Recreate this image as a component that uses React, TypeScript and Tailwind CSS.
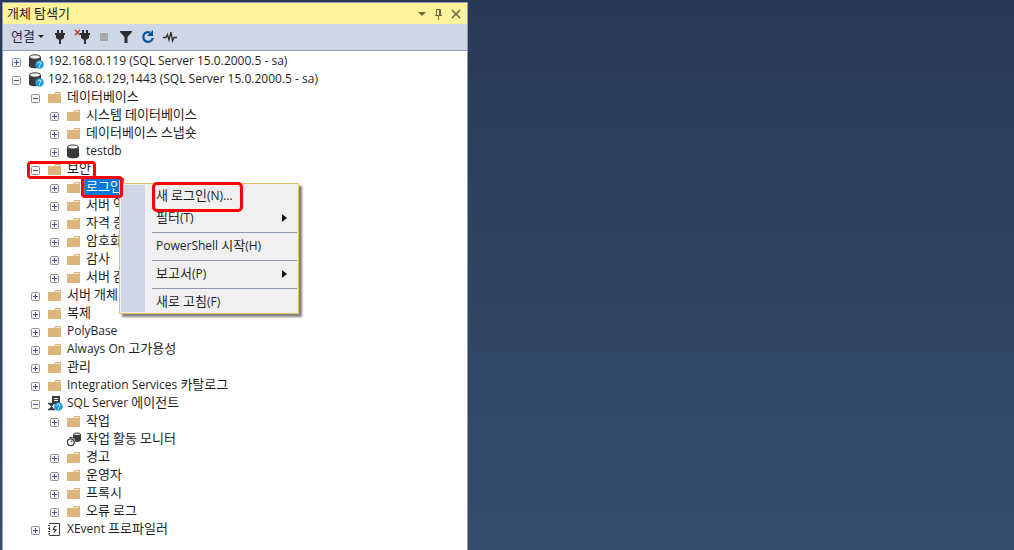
import type { ReactNode } from 'react';

type IconName = 'server' | 'folder' | 'database' | 'agent' | 'monitor' | 'xevent';

interface TreeItem {
  label: string;
  icon: IconName;
  open?: boolean;
  leaf?: boolean;
  selected?: boolean;
  marked?: boolean;
  children?: TreeItem[];
}

const tree: TreeItem[] = [
  { label: '192.168.0.119 (SQL Server 15.0.2000.5 - sa)', icon: 'server' },
  {
    label: '192.168.0.129,1443 (SQL Server 15.0.2000.5 - sa)',
    icon: 'server',
    open: true,
    children: [
      {
        label: '데이터베이스',
        icon: 'folder',
        open: true,
        children: [
          { label: '시스템 데이터베이스', icon: 'folder' },
          { label: '데이터베이스 스냅숏', icon: 'folder' },
          { label: 'testdb', icon: 'database' },
        ],
      },
      {
        label: '보안',
        icon: 'folder',
        open: true,
        marked: true,
        children: [
          { label: '로그인', icon: 'folder', selected: true },
          { label: '서버 역할', icon: 'folder' },
          { label: '자격 증명', icon: 'folder' },
          { label: '암호화', icon: 'folder' },
          { label: '감사', icon: 'folder' },
          { label: '서버 감사', icon: 'folder' },
        ],
      },
      { label: '서버 개체', icon: 'folder' },
      { label: '복제', icon: 'folder' },
      { label: 'PolyBase', icon: 'folder' },
      { label: 'Always On 고가용성', icon: 'folder' },
      { label: '관리', icon: 'folder' },
      { label: 'Integration Services 카탈로그', icon: 'folder' },
      {
        label: 'SQL Server 에이전트',
        icon: 'agent',
        open: true,
        children: [
          { label: '작업', icon: 'folder' },
          { label: '작업 활동 모니터', icon: 'monitor', leaf: true },
          { label: '경고', icon: 'folder' },
          { label: '운영자', icon: 'folder' },
          { label: '프록시', icon: 'folder' },
          { label: '오류 로그', icon: 'folder' },
        ],
      },
      { label: 'XEvent 프로파일러', icon: 'xevent' },
    ],
  },
];

const menuGroups = [
  [
    { label: '새 로그인(N)...', marked: true },
    { label: '필터(T)', submenu: true },
  ],
  [{ label: 'PowerShell 시작(H)' }],
  [{ label: '보고서(P)', submenu: true }],
  [{ label: '새로 고침(F)' }],
];

// Hangul runs one step larger than Latin so both look the same height
function Label({ text }: { text: string }) {
  return (
    <span className="whitespace-nowrap">
      {text.split(/([가-힣]+)/).map((run, i) => (
        <span key={i} className={i % 2 ? 'text-[13px]' : 'text-xs'}>{run}</span>
      ))}
    </span>
  );
}

function HelpBadge() {
  return (
    <>
      <circle cx="10.5" cy="10.5" r="4.3" fill="#1e9be0" />
      <path d="M9 9.500c0-2 3-2 3 0 0 1-1.500 1-1.500 2M10.500 12.300v1.200" stroke="#fff" fill="none" />
    </>
  );
}

function TreeIcon({ name }: { name: IconName }) {
  const icons: Record<IconName, ReactNode> = {
    folder: (
      <>
        <path d="M0 4h6l1.500-2H13v11H0z" fill="#dcb67a" />
        <path d="M7.500 3.500H12" stroke="#f3e3c8" />
      </>
    ),
    database: (
      <>
        <path d="M0 3v9c0 3 12 3 12 0V3z" fill="#3a3a3a" />
        <ellipse cx="6" cy="3" rx="5.500" ry="2" fill="#f4f4f4" stroke="#3a3a3a" />
      </>
    ),
    server: (
      <>
        <path d="M0 3v9c0 3 12 3 12 0V3z" fill="#3a3a3a" />
        <ellipse cx="6" cy="3" rx="5.500" ry="2.200" fill="#f4f4f4" stroke="#3a3a3a" />
        <HelpBadge />
      </>
    ),
    agent: (
      <>
        <path d="M4 0h8v8H4z" fill="#3a3a3a" />
        <path d="M6 2.500h4M6 4.500h4" stroke="#fff" />
        <path d="M0 7.500h7M0 13.500h7" stroke="#3a3a3a" strokeWidth="1.500" />
        <path d="M1 8h5L4 10.500 6 13H1l2-2.500z" fill="#3a3a3a" />
        <HelpBadge />
      </>
    ),
    monitor: (
      <>
        <path d="M6 2v6c0 2.500 8 2.500 8 0V2z" fill="#3a3a3a" />
        <ellipse cx="10" cy="2.200" rx="3.500" ry="1.200" fill="#f4f4f4" stroke="#3a3a3a" />
        <circle cx="3.800" cy="10" r="4.600" fill="#fff" />
        <circle cx="3.800" cy="10.200" r="3.400" fill="#fff" stroke="#3a3a3a" strokeWidth="1.300" />
        <path d="M3.800 10.200l1.600-1.600M2.500 5.500h3" stroke="#3a3a3a" strokeWidth="1.200" />
      </>
    ),
    xevent: (
      <>
        <path d="M1.500 1.500h10v12h-10z" fill="#fff" stroke="#3a3a3a" />
        <path d="M1.500 2v12" stroke="#fff" strokeDasharray="1 1" />
        <path d="M0 3.500h2M0 6.500h2M0 9.500h2M0 12h2" stroke="#3a3a3a" />
        <path d="M8.500 4.500h-2l-1 3h2.500l-2 3" stroke="#3a3a3a" strokeWidth="1.200" fill="none" />
      </>
    ),
  };
  return <svg viewBox="0 0 15 15" className="h-[15px] w-[15px] shrink-0">{icons[name]}</svg>;
}

function Expander({ open }: { open?: boolean }) {
  return (
    <button type="button" aria-label={open ? '접기' : '펼치기'} className="mt-[2px] h-[9px] w-[9px] shrink-0">
      <svg viewBox="0 0 9 9" className="block h-[9px] w-[9px]">
        <rect x=".5" y=".5" width="8" height="8" rx="1" fill="#f5f5f5" stroke="#919191" />
        <path d={open ? 'M2 4.500h5' : 'M2 4.500h5M4.500 2v5'} stroke="#3c56a8" />
      </svg>
    </button>
  );
}

function TreeRow({ item }: { item: TreeItem }) {
  return (
    <li>
      <div className="relative flex h-[18px] items-center">
        {item.leaf ? <span className="w-[9px]" /> : <Expander open={item.open} />}
        <span className="ml-2 flex"><TreeIcon name={item.icon} /></span>
        <span className={item.selected ? 'relative ml-[2px] flex h-[18px] items-center border border-dotted border-[#d98a28] bg-[#0078d7] px-px text-white' : 'ml-1 flex'}>
          <Label text={item.label} />
          {item.selected && <span className="absolute -bottom-[3px] -left-1 -top-[3px] right-0 z-20 rounded-[4px] border-3 border-[#ff0000]" />}
          {item.selected && <ContextMenu />}
        </span>
        {item.marked && <span className="absolute -left-1 top-px h-[18px] w-[69px] rounded-[4px] border-3 border-[#ff0000]" />}
      </div>
      {item.open && item.children && (
        <ul className="pl-[19px]">
          {item.children.map(child => <TreeRow key={child.label} item={child} />)}
        </ul>
      )}
    </li>
  );
}

function ContextMenu() {
  return (
    <div className="absolute left-[34px] top-[4px] z-10 flex w-[180px] border border-[#e5c365] bg-[#f0f0f0] text-[#1e1e1e] shadow-[3px_3px_2px_rgba(0,0,0,0.5)]">
      <div className="m-px w-6 shrink-0 bg-[#cfd6e5]" />
      <div className="flex-1 pl-1.5 pr-px pt-px">
        {menuGroups.map((group, i) => (
          <div key={i} className="border-[#8f9bad] pb-[3px] not-first:border-t not-first:pt-[2px] last:pb-0">
            {group.map(entry => (
              <button key={entry.label} type="button" className="relative flex h-[22px] w-full items-center justify-between pl-1 pr-2.5">
                <Label text={entry.label} />
                {'submenu' in entry && (
                  <svg viewBox="0 0 5 8" className="h-2 w-[5px]"><path d="M0 0l5 4-5 4z" fill="#111" /></svg>
                )}
                {'marked' in entry && <span className="absolute -top-[3px] left-0 h-[30px] w-[91px] rounded-[5px] border-3 border-[#ff0000]" />}
              </button>
            ))}
          </div>
        ))}
      </div>
    </div>
  );
}

function Plug() {
  return <path d="M5 1h2v3h2V1h2v3h2v2h-1v3l-2 1.500H9V15H7v-4.500H6L4 9V6H3V4h2z" fill="#2d2d2d" />;
}

function Toolbar() {
  return (
    <div className="flex h-[26px] items-center bg-[#cfd6e5] pl-2 text-[#1b293e]">
      <button type="button" className="flex items-center gap-[3px]">
        <Label text="연결" />
        <svg viewBox="0 0 6 3" className="h-[3px] w-1.5"><path d="M0 0h6L3 3z" fill="#1b293e" /></svg>
      </button>
      <button type="button" aria-label="개체 탐색기 연결" className="ml-2">
        <svg viewBox="0 0 16 16" className="h-4 w-4"><Plug /></svg>
      </button>
      <button type="button" aria-label="연결 끊기" className="ml-1.5">
        <svg viewBox="0 0 18 16" className="h-4 w-[18px]">
          <g transform="translate(3 0)"><Plug /></g>
          <path d="M1 1l5 5M6 1L1 6" stroke="#b5341f" strokeWidth="1.300" />
        </svg>
      </button>
      <button type="button" aria-label="중지" className="ml-2 h-2 w-2 bg-[#a7a9b0]" />
      <button type="button" aria-label="필터" className="ml-3">
        <svg viewBox="0 0 12 12" className="h-3 w-3"><path d="M0 0h12v1L7.500 6v6h-3V6L0 1z" fill="#2d2d2d" /></svg>
      </button>
      <button type="button" aria-label="새로 고침" className="ml-[9px]">
        <svg viewBox="0 0 14 14" className="h-3.5 w-3.5" fill="none">
          <path d="M9 2.600A4.800 4.800 0 1 0 11.800 8" stroke="#00539c" strokeWidth="2.200" />
          <path d="M12 0v6H6z" fill="#00539c" />
        </svg>
      </button>
      <button type="button" aria-label="작업 모니터" className="ml-2">
        <svg viewBox="0 0 14 12" className="h-3 w-3.5" fill="none">
          <path d="M0 6.500h3l1.500-3L6 9l2-8 1.500 9 1.500-3.500h3" stroke="#2d2d2d" strokeWidth="1.300" />
        </svg>
      </button>
    </div>
  );
}

export default function App() {
  return (
    <div className="flex min-h-screen overflow-hidden bg-gradient-to-b from-[#293955] to-[#364d6d] pl-[2px] pt-[2px] font-['Open_Sans','Noto_Sans_CJK_KR',sans-serif] text-xs text-[#1e1e1e]">
      <section className="flex w-[466px] shrink-0 flex-col border-x border-t border-[#8e9bbc]">
        <header className="flex h-[21px] items-center bg-[#fff29d] pl-1 pr-1.5">
          <h1 className="flex-1"><Label text="개체 탐색기" /></h1>
          <div className="flex items-center gap-2 text-[#75633d]">
            <button type="button" aria-label="창 위치">
              <svg viewBox="0 0 8 4" className="h-1 w-2"><path d="M0 0h8L4 4z" fill="currentColor" /></svg>
            </button>
            <button type="button" aria-label="자동 숨기기">
              <svg viewBox="0 0 9 12" className="h-3 w-[9px]" fill="none" stroke="currentColor">
                <path d="M2.500 7V1.500h4V7M1 7.500h7M4.500 8v4M5.500 2v5" />
              </svg>
            </button>
            <button type="button" aria-label="닫기">
              <svg viewBox="0 0 10 10" className="h-2.5 w-2.5" stroke="currentColor" strokeWidth="1.600">
                <path d="M1 1l8 8M9 1L1 9" />
              </svg>
            </button>
          </div>
        </header>
        <Toolbar />
        <ul className="flex-1 border-t border-[#8e9bbc] bg-white pl-[9px] pt-px">
          {tree.map(item => <TreeRow key={item.label} item={item} />)}
        </ul>
      </section>
    </div>
  );
}
